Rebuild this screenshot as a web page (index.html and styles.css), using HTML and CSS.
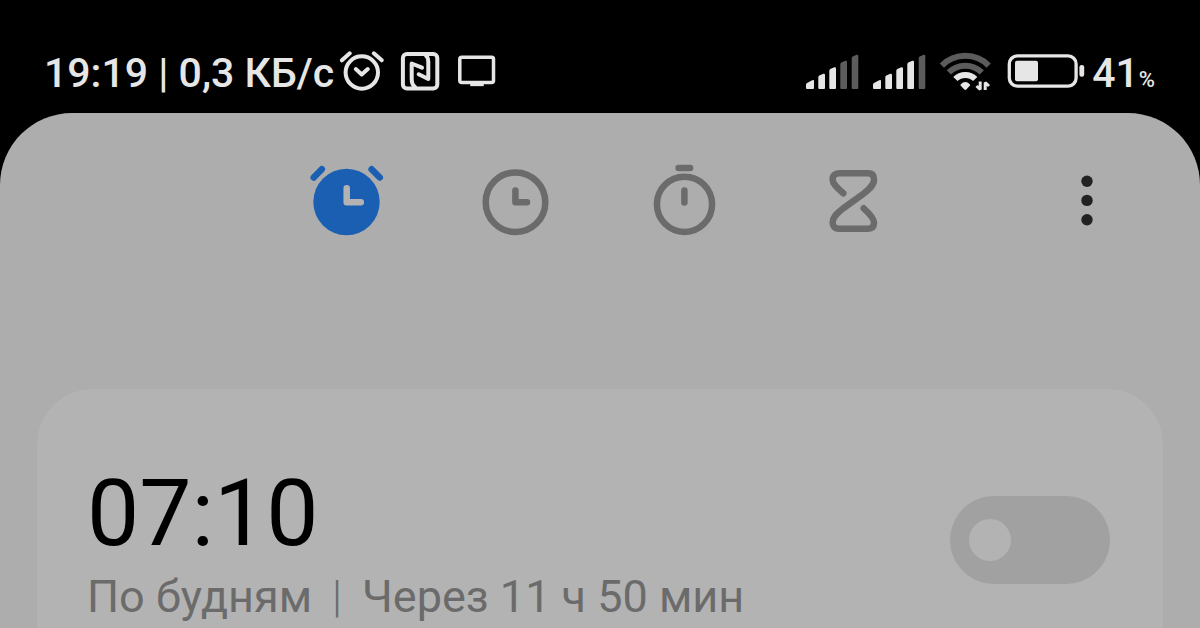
FILE: index.html
```
<!DOCTYPE html>
<html lang="ru">
<head>
    <meta charset="UTF-8">
    <meta name="viewport" content="width=device-width, initial-scale=1.0">
    <title>Будильник</title>
    <link rel="stylesheet" href="styles.css">
</head>
<body>
    <div class="statusBar">
        <div class="statusLeft">
            <span>19:19 | 0,3 КБ/с</span>
            <div class="icons">
                <svg width="44" height="48" viewBox="0 0 44 48" class="line">
                    <circle cx="22.8" cy="23.5" r="16.2"/>
                    <path d="M2.9 11.3L10.8 4.3M34.8 4.3L42.8 11.3M16.8 20L22.7 25.5L28.8 20"/>
                </svg>
                <svg width="39" height="48" viewBox="0 0 39 48" class="line">
                    <rect x="1.9" y="4.9" width="34.4" height="34.6" rx="4"/>
                    <path d="M14 38C11 36 10.7 33 10.7 30V14.5L21 18.7M24.5 6C27 8 27.3 10 27.3 13V30L17.7 25.3"/>
                </svg>
                <svg width="38" height="48" viewBox="0 0 38 48" class="line thin">
                    <rect x="1.8" y="8.2" width="33.7" height="25.2" rx="2"/>
                    <path d="M14 35.4H24"/>
                </svg>
            </div>
        </div>
        <div class="statusRight">
            <svg width="54" height="48" viewBox="0 0 54 48" class="bars">
                <path d="M1 39V36Q1 34.6 2 34L7.2 31.3Q9 30.7 9 32V39Q9 40 8 40H2Q1 40 1 39Z"/>
                <path d="M13.3 39V28.5Q13.3 27 14.3 26.5L18.3 24.8Q20 24.5 20 26V39Q20 40 19 40H14.3Q13.3 40 13.3 39Z"/>
                <path d="M24.3 39V22Q24.3 20.5 25.3 20L29.3 18.2Q31 18 31 19.5V39Q31 40 30 40H25.3Q24.3 40 24.3 39Z"/>
                <path class="off" d="M35.3 39V15.5Q35.3 14 36.3 13.5L40.3 11.8Q42 11.5 42 13V39Q42 40 41 40H36.3Q35.3 40 35.3 39Z"/>
                <path class="off" d="M46.7 39V9.5Q46.7 8 47.7 7.5L51.6 5.8Q53.3 5.5 53.3 7V39Q53.3 40 52.3 40H47.7Q46.7 40 46.7 39Z"/>
            </svg>
            <svg width="54" height="48" viewBox="0 0 54 48" class="bars">
                <path d="M1 39V36Q1 34.6 2 34L7.2 31.3Q9 30.7 9 32V39Q9 40 8 40H2Q1 40 1 39Z"/>
                <path d="M13.3 39V28.5Q13.3 27 14.3 26.5L18.3 24.8Q20 24.5 20 26V39Q20 40 19 40H14.3Q13.3 40 13.3 39Z"/>
                <path d="M24.3 39V22Q24.3 20.5 25.3 20L29.3 18.2Q31 18 31 19.5V39Q31 40 30 40H25.3Q24.3 40 24.3 39Z"/>
                <path d="M35.3 39V15.5Q35.3 14 36.3 13.5L40.3 11.8Q42 11.5 42 13V39Q42 40 41 40H36.3Q35.3 40 35.3 39Z"/>
                <path class="off" d="M46.7 39V9.5Q46.7 8 47.7 7.5L51.6 5.8Q53.3 5.5 53.3 7V39Q53.3 40 52.3 40H47.7Q46.7 40 46.7 39Z"/>
            </svg>
            <svg width="52" height="48" viewBox="0 0 52 48" class="wifi">
                <path class="off" d="M2.9 16.6A33 33 0 0 1 49.7 16.6M9.8 23.4A23.5 23.5 0 0 1 42.8 23.4"/>
                <path d="M16.4 30A14 14 0 0 1 36.2 30"/>
                <path class="fill" d="M21.6 35.4Q26.3 30.6 31 35.4Q31.4 36.2 30.8 36.8L27.3 40.5Q26.3 41.4 25.3 40.5L21.8 36.8Q21.2 36.2 21.6 35.4Z"/>
                <path class="arrows" d="M41.2 32.5V40.5L37.5 37M46.2 41V33.5L50 37"/>
            </svg>
            <div class="battery">
                <svg width="83" height="48" viewBox="0 0 83 48">
                    <rect x="5.3" y="6.9" width="66.8" height="30.2" rx="8" fill="none" stroke="#e6e6e6" stroke-width="3.3"/>
                    <rect x="11" y="11.7" width="23" height="20.6" rx="2"/>
                    <rect x="75.4" y="16" width="4.8" height="11.7" rx="2.2"/>
                </svg>
                <span>41<small>%</small></span>
            </div>
        </div>
    </div>

    <div class="panel">
        <div class="header">
            <div class="tabs">
                <button type="button" class="active" aria-label="Будильник">
                    <svg width="75" height="75" viewBox="0 0 75 75">
                        <circle class="face" cx="37.5" cy="39" r="33.2"/>
                        <path d="M4.7 14.5L12.8 6.2M62.6 6.2L70.8 14.5"/>
                        <path class="hand" d="M37.7 25.2V39.3H51.8"/>
                    </svg>
                </button>
                <button type="button" aria-label="Часы">
                    <svg width="75" height="75" viewBox="0 0 75 75">
                        <circle cx="37.5" cy="39.2" r="29.8"/>
                        <path d="M37.4 27.5V39.3H49"/>
                    </svg>
                </button>
                <button type="button" aria-label="Секундомер">
                    <svg width="75" height="75" viewBox="0 0 75 75">
                        <circle cx="37.5" cy="41.3" r="27.6"/>
                        <path d="M31.6 5H43.1M37.4 27.5V39.5"/>
                    </svg>
                </button>
                <button type="button" aria-label="Таймер">
                    <svg width="75" height="75" viewBox="0 0 75 75">
                        <path d="M27.3 30.3C20 24 16.6 20.5 16.6 16.5C16.6 12.5 19 10.3 23 10.3H52C56 10.3 58 12.5 58 16.5C58 22 54 25.5 48 30.3L27 45.5C20 51 16.6 54.5 16.6 59.5C16.6 63.5 19 65.7 23 65.7H52C56 65.7 58 63.5 58 59.5C58 55.5 54.5 51.5 47.7 45.3"/>
                    </svg>
                </button>
            </div>
            <button type="button" class="menu" aria-label="Ещё">
                <svg width="36" height="75" viewBox="0 0 36 75">
                    <circle cx="18" cy="18.2" r="5.7"/>
                    <circle cx="18" cy="37.4" r="5.7"/>
                    <circle cx="18" cy="56.8" r="5.7"/>
                </svg>
            </button>
        </div>

        <div class="list">
            <div class="alarm">
                <label for="alarm1">
                    <span class="time">07:10</span>
                    <span class="info">По будням<span class="sep">|</span>Через 11 ч 50 мин</span>
                </label>
                <input type="checkbox" id="alarm1" class="switch">
            </div>
        </div>
    </div>
</body>
</html>
```
FILE: styles.css
```
*{padding: 0;margin: 0;box-sizing: border-box;}
body{display: flex;flex-direction: column;min-height: 100vh;background: #000;font-family: Roboto, "Noto Sans", sans-serif;}
svg{display: block;overflow: visible;}
button{background: none;border: none;cursor: pointer;}

/* status bar */
.statusBar{display: flex;justify-content: space-between;align-items: center;padding: 49px 45px 16px 44px;
color: #e6e6e6;font-size: 41px;font-weight: 500;line-height: 48px;white-space: nowrap;}
.statusLeft{display: flex;align-items: center;gap: 5px;}
.icons{display: flex;gap: 18px;}
.statusRight{display: flex;align-items: center;gap: 13px;}
.battery{display: flex;align-items: center;gap: 5px;}
.battery small{font-size: 22px;line-height: 22px;}
.statusBar svg{fill: #e6e6e6;}
.statusBar .line{fill: none;stroke: #e6e6e6;stroke-width: 4;stroke-linecap: round;stroke-linejoin: round;}
.statusBar .thin{stroke-width: 3.5;stroke-linecap: square;}
.bars .off{fill: #5c5c5c;}
.statusBar .wifi{fill: none;stroke: #e6e6e6;stroke-width: 6;}
.wifi .off{stroke: #5c5c5c;}
.wifi .fill{fill: #e6e6e6;stroke: none;}
.wifi .arrows{stroke-width: 3;stroke-linejoin: bevel;}

/* app */
.panel{display: flex;flex-direction: column;flex: 1;padding: 50px 37px 0;background: #adadad;border-radius: 72px 72px 0 0;}
.header{display: grid;grid-template-columns: 1fr auto 1fr;padding: 0 58px;}
.tabs{grid-column: 2;display: flex;gap: 94px;}
.tabs svg{fill: none;stroke: #6b6b6b;stroke-width: 6.5;stroke-linecap: round;stroke-linejoin: round;}
.tabs .active svg{stroke: #1a5fb2;}
.tabs .face{fill: #1a5fb2;stroke: none;}
.tabs .hand{stroke: #b3b3b3;}
.menu{justify-self: end;}
.menu svg{fill: #222;}

.list{flex: 1;margin-top: 151px;padding-top: 70px;background: #b3b3b3;border-radius: 56px 56px 0 0;}
.alarm{display: flex;justify-content: space-between;align-items: center;padding: 0 53px 0 50px;}
.time{display: block;font-size: 93px;line-height: 110px;color: #000;}
.info{display: block;margin-top: 4px;font-size: 45px;line-height: 48px;color: #6b6b6b;}
.sep{margin: 0 20px;font-weight: 300;}
.switch{appearance: none;display: flex;align-items: center;width: 160px;height: 88px;padding: 0 19px;background: #a1a1a1;
border-radius: 44px;cursor: pointer;}
.switch::before{content: "";width: 42px;height: 42px;background: #b3b3b3;border-radius: 50%;}
.switch:checked{justify-content: flex-end;background: #1a5fb2;}
```
